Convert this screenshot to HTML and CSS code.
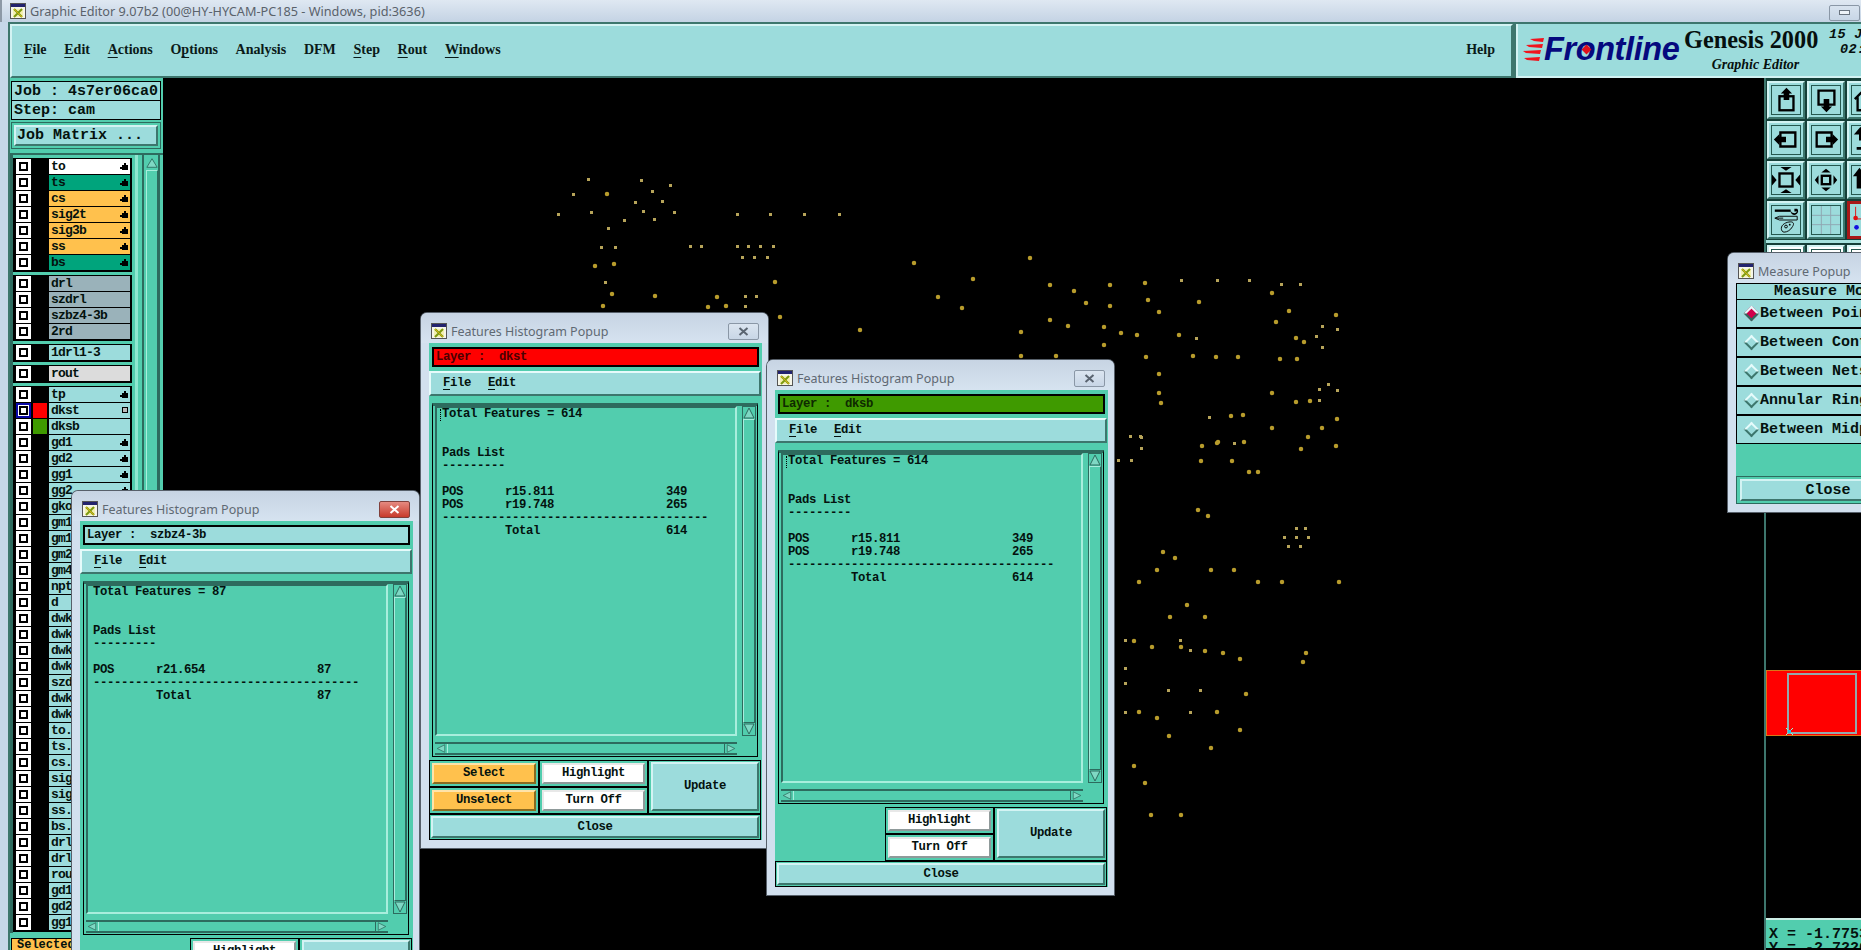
FILE: index.html
```html
<!DOCTYPE html>
<html lang="en">
<head>
<meta charset="utf-8">
<title>Graphic Editor</title>
<link rel="stylesheet" href="styles.css">
</head>
<body>
<svg class="defs" width="0" height="0" aria-hidden="true">
  <symbol id="winicon" viewBox="0 0 16 16">
    <rect x="0.5" y="0.5" width="15" height="15" fill="#f6f6e8" stroke="#555"/>
    <rect x="1" y="1" width="14" height="3" fill="#23236e"/>
    <rect x="3" y="6" width="10" height="8" fill="#f4f0b0"/>
    <path d="M4 6l8 8M12 6l-8 8" stroke="#7c9a10" stroke-width="2"/>
    <path d="M4 6l8 8" stroke="#d8b010" stroke-width="1"/>
  </symbol>
  <symbol id="thumb" viewBox="0 0 8 8">
    <path d="M4 0h2v2h2v5H2V6H0V4h2V2h2z" fill="#000"/>
  </symbol>
</svg>

<div class="titlebar">
  <svg class="winicon"><use href="#winicon"/></svg>
  <span class="titletext">Graphic Editor 9.07b2 (00@HY-HYCAM-PC185 - Windows, pid:3636)</span>
  <span class="minbtn"><i></i></span>
</div>

<div class="frame">
  <header class="header">
    <nav class="menubar">
      <span><u>F</u>ile</span><span><u>E</u>dit</span><span><u>A</u>ctions</span><span>O<u>p</u>tions</span><span>Analysis</span><span>DFM</span><span><u>S</u>tep</span><span><u>R</u>out</span><span><u>W</u>indows</span>
      <span class="help">Help</span>
    </nav>
    <div class="brand">
      <svg class="speed" width="21" height="24" viewBox="0 0 21 24"><path d="M7 1l14-1-1 4-9-1zM3 7l17-1-1 4-13-1zM0 13l18-1-1 4-14-1zM1 20l16-1-1 4-12-1z" fill="#f0141e"/></svg>
      <span class="frontline">Fr<span class="ring">o<i></i></span>ntline</span>
      <div class="genesis">
        <div class="gen-name">Genesis 2000</div>
        <div class="gen-sub">Graphic Editor</div>
      </div>
      <div class="clock">
        <div>15 Jan</div>
        <div class="clock-time">02:15</div>
      </div>
    </div>
  </header>

  <div class="main">
    <aside class="left">
      <div class="jobinfo">
        <div class="jobline">Job : 4s7er06ca0</div>
        <div class="jobline">Step: cam</div>
      </div>
      <div class="jobmatrix"><div class="raised jm-btn">Job Matrix ...</div></div>
      <div class="listwrap">
        <div class="list">
          <div class="group">
            <div class="row"><b class="chk"></b><i class="sw"></i><span class="lab white">to<svg class="th"><use href="#thumb"/></svg></span></div>
            <div class="row"><b class="chk"></b><i class="sw"></i><span class="lab green">ts<svg class="th"><use href="#thumb"/></svg></span></div>
            <div class="row"><b class="chk"></b><i class="sw"></i><span class="lab orange">cs<svg class="th"><use href="#thumb"/></svg></span></div>
            <div class="row"><b class="chk"></b><i class="sw"></i><span class="lab orange">sig2t<svg class="th"><use href="#thumb"/></svg></span></div>
            <div class="row"><b class="chk"></b><i class="sw"></i><span class="lab orange">sig3b<svg class="th"><use href="#thumb"/></svg></span></div>
            <div class="row"><b class="chk"></b><i class="sw"></i><span class="lab orange">ss<svg class="th"><use href="#thumb"/></svg></span></div>
            <div class="row"><b class="chk"></b><i class="sw"></i><span class="lab green">bs<svg class="th"><use href="#thumb"/></svg></span></div>
          </div>
          <div class="group">
            <div class="row"><b class="chk"></b><i class="sw"></i><span class="lab grey">drl</span></div>
            <div class="row"><b class="chk"></b><i class="sw"></i><span class="lab grey">szdrl</span></div>
            <div class="row"><b class="chk"></b><i class="sw"></i><span class="lab grey">szbz4-3b</span></div>
            <div class="row"><b class="chk"></b><i class="sw"></i><span class="lab grey">2rd</span></div>
          </div>
          <div class="group">
            <div class="row"><b class="chk"></b><i class="sw"></i><span class="lab">1drl1-3</span></div>
          </div>
          <div class="group">
            <div class="row"><b class="chk"></b><i class="sw"></i><span class="lab pale">rout</span></div>
          </div>
          <div class="group">
            <div class="row"><b class="chk"></b><i class="sw"></i><span class="lab">tp<svg class="th"><use href="#thumb"/></svg></span></div>
            <div class="row"><b class="chk active"></b><i class="sw red"></i><span class="lab">dkst<i class="boxmark"></i></span></div>
            <div class="row"><b class="chk"></b><i class="sw grn"></i><span class="lab">dksb</span></div>
            <div class="row"><b class="chk"></b><i class="sw"></i><span class="lab">gd1<svg class="th"><use href="#thumb"/></svg></span></div>
            <div class="row"><b class="chk"></b><i class="sw"></i><span class="lab">gd2<svg class="th"><use href="#thumb"/></svg></span></div>
            <div class="row"><b class="chk"></b><i class="sw"></i><span class="lab">gg1<svg class="th"><use href="#thumb"/></svg></span></div>
            <div class="row"><b class="chk"></b><i class="sw"></i><span class="lab">gg2<svg class="th"><use href="#thumb"/></svg></span></div>
            <div class="row"><b class="chk"></b><i class="sw"></i><span class="lab">gko</span></div>
            <div class="row"><b class="chk"></b><i class="sw"></i><span class="lab">gm1</span></div>
            <div class="row"><b class="chk"></b><i class="sw"></i><span class="lab">gm1</span></div>
            <div class="row"><b class="chk"></b><i class="sw"></i><span class="lab">gm2</span></div>
            <div class="row"><b class="chk"></b><i class="sw"></i><span class="lab">gm4</span></div>
            <div class="row"><b class="chk"></b><i class="sw"></i><span class="lab">npt</span></div>
            <div class="row"><b class="chk"></b><i class="sw"></i><span class="lab">d</span></div>
            <div class="row"><b class="chk"></b><i class="sw"></i><span class="lab">dwk</span></div>
            <div class="row"><b class="chk"></b><i class="sw"></i><span class="lab">dwk</span></div>
            <div class="row"><b class="chk"></b><i class="sw"></i><span class="lab">dwk</span></div>
            <div class="row"><b class="chk"></b><i class="sw"></i><span class="lab">dwk</span></div>
            <div class="row"><b class="chk"></b><i class="sw"></i><span class="lab">szd</span></div>
            <div class="row"><b class="chk"></b><i class="sw"></i><span class="lab">dwk</span></div>
            <div class="row"><b class="chk"></b><i class="sw"></i><span class="lab">dwk</span></div>
            <div class="row"><b class="chk"></b><i class="sw"></i><span class="lab">to.</span></div>
            <div class="row"><b class="chk"></b><i class="sw"></i><span class="lab">ts.</span></div>
            <div class="row"><b class="chk"></b><i class="sw"></i><span class="lab">cs.</span></div>
            <div class="row"><b class="chk"></b><i class="sw"></i><span class="lab">sig</span></div>
            <div class="row"><b class="chk"></b><i class="sw"></i><span class="lab">sig</span></div>
            <div class="row"><b class="chk"></b><i class="sw"></i><span class="lab">ss.</span></div>
            <div class="row"><b class="chk"></b><i class="sw"></i><span class="lab">bs.</span></div>
            <div class="row"><b class="chk"></b><i class="sw"></i><span class="lab">drl</span></div>
            <div class="row"><b class="chk"></b><i class="sw"></i><span class="lab">drl</span></div>
            <div class="row"><b class="chk"></b><i class="sw"></i><span class="lab">rou</span></div>
            <div class="row"><b class="chk"></b><i class="sw"></i><span class="lab">gd1</span></div>
            <div class="row"><b class="chk"></b><i class="sw"></i><span class="lab">gd2</span></div>
            <div class="row"><b class="chk"></b><i class="sw"></i><span class="lab">gg1</span></div>
          </div>
        </div>
        <div class="lscroll">
          <div class="lscroll-bands"></div>
          <div class="lscroll-track">
            <svg class="larrow" viewBox="0 0 14 12"><path d="M7 1l6 10H1z" fill="#7fd8c4" stroke="#2d6b5e"/></svg>
            <div class="lthumb"></div>
          </div>
        </div>
      </div>
      <div class="leftfoot"><span class="selected">Selected</span></div>
    </aside>

    <section class="canvas">
      <svg class="dots" width="1602" height="872" viewBox="163 78 1602 872" fill="none" aria-hidden="true">
        <path class="dot-s" d="M588 179h0M641 180h0M670 185h0M573 194h0M652 191h0M635 202h0M662 201h0M558 214h0M591 212h0M643 211h0M674 212h0M624 220h0M654 219h0M608 228h0M601 247h0M615 247h0M605 282h0M690 246h0M701 246h0M737 214h0M770 214h0M804 214h0M839 214h0M737 246h0M748 246h0M760 246h0M773 246h0M742 257h0M754 257h0M767 257h0M745 296h0M756 296h0M745 306h0M1181 280h0M1217 280h0M1249 280h0M1281 284h0M1300 284h0M1322 326h0M1337 329h0M1196 338h0M1316 336h0M1322 347h0M1328 384h0M1319 389h0M1337 390h0M1319 400h0M1209 417h0M1141 437h0M1141 448h0M1234 443h0M1130 436h0M1140 436h0M1118 460h0M1131 460h0M1296 528h0M1305 528h0M1284 537h0M1296 537h0M1308 537h0M1288 546h0M1300 546h0M1180 640h0M1190 650h0M1125 640h0M1125 668h0M1125 683h0M1125 712h0M1190 712h0M1200 690h0M1168 690h0"/>
        <path class="dot-l" d="M607 194h0M595 266h0M614 264h0M612 294h0M655 296h0M603 306h0M775 282h0M717 297h0M708 307h0M726 306h0M780 317h0M860 330h0M914 263h0M938 297h0M962 308h0M973 279h0M1030 258h0M1050 285h0M1021 332h0M1050 320h0M1068 326h0M1021 356h0M1056 356h0M1074 291h0M1110 285h0M1086 303h0M1110 306h0M1104 327h0M1121 333h0M1104 345h0M1145 283h0M1272 293h0M1148 300h0M1199 302h0M1159 312h0M1289 311h0M1336 315h0M1276 322h0M1137 335h0M1179 335h0M1296 338h0M1304 342h0M1146 357h0M1193 356h0M1216 357h0M1238 357h0M1280 359h0M1297 359h0M1159 374h0M1159 393h0M1272 393h0M1161 403h0M1296 402h0M1310 401h0M1231 416h0M1243 415h0M1337 419h0M1272 428h0M1322 428h0M1308 437h0M1202 446h0M1217 443h0M1336 446h0M1301 449h0M1218 442h0M1244 442h0M1201 461h0M1232 461h0M1249 472h0M1258 472h0M1198 510h0M1208 516h0M1163 552h0M1175 558h0M1211 570h0M1234 570h0M1258 582h0M1282 582h0M1339 582h0M1139 582h0M1157 570h0M1187 605h0M1205 617h0M1306 653h0M1303 662h0M1170 617h0M1134 641h0M1152 647h0M1181 647h0M1205 651h0M1223 653h0M1240 659h0M1246 694h0M1217 712h0M1240 730h0M1211 748h0M1139 712h0M1157 718h0M1169 736h0M1134 766h0M1145 783h0M1181 815h0M1151 815h0"/>
      </svg>
    </section>

    <aside class="right">
      <div class="tools">
        <div class="tool"><span class="tool-in"><svg viewBox="0 0 30 30"><rect x="8" y="11" width="15" height="15" fill="none" stroke="#000" stroke-width="2.500"/><path d="M15.500 2l6 6h-3v7h-6V8h-3z" fill="#000"/></svg></span></div>
        <div class="tool"><span class="tool-in"><svg viewBox="0 0 30 30"><path d="M7 5h17v15H7z" fill="none" stroke="#000" stroke-width="2.500"/><path d="M12.500 14h6v8h3l-6 6-6-6h3z" fill="#000"/></svg></span></div>
        <div class="tool"><span class="tool-in"><svg viewBox="0 0 30 30"><path d="M3 14L13 4l10 10M6 12v14h14V12" fill="none" stroke="#000" stroke-width="2.500"/><rect x="11" y="15" width="8" height="7" fill="none" stroke="#000" stroke-width="2"/></svg></span></div>
        <div class="tool"><span class="tool-in"><svg viewBox="0 0 30 30"><path d="M9 7h16v15H9z" fill="none" stroke="#000" stroke-width="2.500"/><path d="M2 14.500l6-6v3h7v6H8v3z" fill="#000"/></svg></span></div>
        <div class="tool"><span class="tool-in"><svg viewBox="0 0 30 30"><path d="M5 7h16v15H5z" fill="none" stroke="#000" stroke-width="2.500"/><path d="M28 14.500l-6-6v3h-7v6h7v3z" fill="#000"/></svg></span></div>
        <div class="tool"><span class="tool-in"><svg viewBox="0 0 30 30"><path d="M9 6v8h10v10H5" fill="none" stroke="#000" stroke-width="3"/><path d="M9 1L2 9h14z" fill="#000"/></svg></span></div>
        <div class="tool"><span class="tool-in"><svg viewBox="0 0 30 30"><rect x="8" y="8" width="14" height="14" fill="none" stroke="#000" stroke-width="2.500"/><path d="M9 1h12l-6 4zM9 29h12l-6-4zM0 9v12l5-6zM30 9v12l-5-6z" fill="#000"/></svg></span></div>
        <div class="tool"><span class="tool-in"><svg viewBox="0 0 30 30"><rect x="10.500" y="10.500" width="9" height="9" fill="none" stroke="#000" stroke-width="2.500"/><path d="M15 3l5 4H10zM15 27l5-4H10zM3 15l4-5v10zM27 15l-4-5v10z" fill="#000"/></svg></span></div>
        <div class="tool"><span class="tool-in"><svg viewBox="0 0 30 30"><path d="M8 2L1 11h4v13h6V11h4z" fill="#000"/></svg></span></div>
        <div class="tool"><span class="tool-in"><svg viewBox="0 0 30 30"><path d="M3 5h17" stroke="#000" stroke-width="2.500"/><path d="M20 5a4 4 0 1 0 7-2h-3v3h3a4 4 0 0 1-7-1z" fill="#000"/><path d="M8 11h19v4H8l-5-2z" fill="none" stroke="#000"/><path d="M4 13h8" stroke="#000"/><path d="M10 24c0-4 5-7 10-7 3 0 4 2 2 5-2 4-6 6-9 6-2 0-3-2-3-4z" fill="none" stroke="#000"/><circle cx="15" cy="22" r="1.500" fill="none" stroke="#000"/><circle cx="19" cy="20" r="1" fill="#000"/></svg></span></div>
        <div class="tool"><span class="tool-in"><svg viewBox="0 0 30 30"><path d="M10 0v30M20 0v30M0 10h30M0 20h30" stroke="#8fa6b0"/></svg></span></div>
        <div class="tool tool-red"><span class="tool-in"><svg viewBox="0 0 30 30"><path d="M6 3v13h22" fill="none" stroke="#e01010"/><circle cx="6" cy="15" r="2.500" fill="#e01010"/><circle cx="7" cy="25" r="2.500" fill="#1010e0"/></svg></span></div>
      </div>
      <div class="tools tools-white">
        <div class="tool tool-w"><span class="tool-in"></span></div>
        <div class="tool tool-w"><span class="tool-in"></span></div>
        <div class="tool tool-w"><span class="tool-in"></span></div>
      </div>
      <div class="preview"><div class="preview-in"><svg class="cursor" width="9" height="9" viewBox="0 0 9 9"><path d="M1 1l7 7M8 1L1 8" stroke="#8fd" stroke-width="1"/><rect x="3" y="3" width="3" height="3" fill="#22c8e8"/></svg></div></div>
      <div class="coords">
        <div>X = -1.7753</div>
        <div>Y = -2.7220</div>
      </div>
    </aside>
  </div>
</div>

<!-- Floating windows -->
<div class="popup pop-c">
  <div class="ptitle"><svg class="winicon"><use href="#winicon"/></svg><span>Features Histogram Popup</span><span class="xbtn xbtn-red"><svg width="11" height="9" viewBox="0 0 11 9"><path d="M1.500 1l8 7M9.500 1l-8 7" stroke="#fff" stroke-width="2"/></svg></span></div>
  <div class="pbody">
    <div class="layer">Layer :  szbz4-3b</div>
    <div class="raised pmenu"><span><u>F</u>ile</span><span><u>E</u>dit</span></div>
    <div class="tarea">
      <div class="tbox"><pre class="ptext">Total Features = 87


Pads List
---------

POS      r21.654                87
--------------------------------------
         Total                  87</pre></div>
      <div class="vs"><svg class="ar" viewBox="0 0 12 12"><path d="M6 1l5 10H1z" fill="#7fd8c4" stroke="#2d6b5e"/></svg><div class="vthumb"></div><svg class="ar" viewBox="0 0 12 12"><path d="M6 11L1 1h10z" fill="#7fd8c4" stroke="#2d6b5e"/></svg></div>
      <div class="hs"><svg class="ar" viewBox="0 0 12 12"><path d="M1 6l10-5v10z" fill="#7fd8c4" stroke="#2d6b5e"/></svg><div class="hthumb"></div><svg class="ar" viewBox="0 0 12 12"><path d="M11 6L1 1v10z" fill="#7fd8c4" stroke="#2d6b5e"/></svg></div>
    </div>
    <div class="actions">
      <div class="cell noborder"></div>
      <div class="cell"><div class="btn white-btn">Highlight</div></div>
      <div class="cell upd"><div class="raised btn">Update</div></div>
      <div class="cell noborder"></div>
      <div class="cell"><div class="btn white-btn">Turn Off</div></div>
    </div>
    <div class="closebar"><div class="raised btn">Close</div></div>
  </div>
</div>

<div class="popup pop-a">
  <div class="ptitle"><svg class="winicon"><use href="#winicon"/></svg><span>Features Histogram Popup</span><span class="xbtn"><svg width="11" height="9" viewBox="0 0 11 9"><path d="M1.500 1l8 7M9.500 1l-8 7" stroke="#5a6470" stroke-width="2"/></svg></span></div>
  <div class="pbody">
    <div class="layer layer-red">Layer :  dkst</div>
    <div class="raised pmenu"><span><u>F</u>ile</span><span><u>E</u>dit</span></div>
    <div class="tarea">
      <div class="tbox"><i class="caret"></i><pre class="ptext">Total Features = 614


Pads List
---------

POS      r15.811                349
POS      r19.748                265
--------------------------------------
         Total                  614</pre></div>
      <div class="vs"><svg class="ar" viewBox="0 0 12 12"><path d="M6 1l5 10H1z" fill="#7fd8c4" stroke="#2d6b5e"/></svg><div class="vthumb"></div><svg class="ar" viewBox="0 0 12 12"><path d="M6 11L1 1h10z" fill="#7fd8c4" stroke="#2d6b5e"/></svg></div>
      <div class="hs"><svg class="ar" viewBox="0 0 12 12"><path d="M1 6l10-5v10z" fill="#7fd8c4" stroke="#2d6b5e"/></svg><div class="hthumb"></div><svg class="ar" viewBox="0 0 12 12"><path d="M11 6L1 1v10z" fill="#7fd8c4" stroke="#2d6b5e"/></svg></div>
    </div>
    <div class="actions">
      <div class="cell"><div class="btn orange-btn">Select</div></div>
      <div class="cell"><div class="btn white-btn">Highlight</div></div>
      <div class="cell upd"><div class="raised btn">Update</div></div>
      <div class="cell"><div class="btn orange-btn">Unselect</div></div>
      <div class="cell"><div class="btn white-btn">Turn Off</div></div>
    </div>
    <div class="closebar"><div class="raised btn">Close</div></div>
  </div>
</div>

<div class="popup pop-b">
  <div class="ptitle"><svg class="winicon"><use href="#winicon"/></svg><span>Features Histogram Popup</span><span class="xbtn"><svg width="11" height="9" viewBox="0 0 11 9"><path d="M1.500 1l8 7M9.500 1l-8 7" stroke="#5a6470" stroke-width="2"/></svg></span></div>
  <div class="pbody">
    <div class="layer layer-green">Layer :  dksb</div>
    <div class="raised pmenu"><span><u>F</u>ile</span><span><u>E</u>dit</span></div>
    <div class="tarea">
      <div class="tbox"><i class="caret"></i><pre class="ptext">Total Features = 614


Pads List
---------

POS      r15.811                349
POS      r19.748                265
--------------------------------------
         Total                  614</pre></div>
      <div class="vs"><svg class="ar" viewBox="0 0 12 12"><path d="M6 1l5 10H1z" fill="#7fd8c4" stroke="#2d6b5e"/></svg><div class="vthumb"></div><svg class="ar" viewBox="0 0 12 12"><path d="M6 11L1 1h10z" fill="#7fd8c4" stroke="#2d6b5e"/></svg></div>
      <div class="hs"><svg class="ar" viewBox="0 0 12 12"><path d="M1 6l10-5v10z" fill="#7fd8c4" stroke="#2d6b5e"/></svg><div class="hthumb"></div><svg class="ar" viewBox="0 0 12 12"><path d="M11 6L1 1v10z" fill="#7fd8c4" stroke="#2d6b5e"/></svg></div>
    </div>
    <div class="actions">
      <div class="cell noborder"></div>
      <div class="cell"><div class="btn white-btn">Highlight</div></div>
      <div class="cell upd"><div class="raised btn">Update</div></div>
      <div class="cell noborder"></div>
      <div class="cell"><div class="btn white-btn">Turn Off</div></div>
    </div>
    <div class="closebar"><div class="raised btn">Close</div></div>
  </div>
</div>

<div class="popup pop-d">
  <div class="ptitle"><svg class="winicon"><use href="#winicon"/></svg><span>Measure Popup</span></div>
  <div class="mbody">
    <div class="mlabel">Measure Mode</div>
    <div class="mrow"><i class="dia on"></i>Between Points</div>
    <div class="mrow"><i class="dia"></i>Between Contours</div>
    <div class="mrow"><i class="dia"></i>Between Nets</div>
    <div class="mrow"><i class="dia"></i>Annular Ring</div>
    <div class="mrow"><i class="dia"></i>Between Midpoints</div>
    <div class="mspace"></div>
    <div class="mclose"><div class="raised mclose-btn">Close</div></div>
  </div>
</div>
</body>
</html>
```

FILE: styles.css
```css
*, *::before, *::after { box-sizing: border-box; }
html { height: 950px; overflow: hidden; }
body {
  margin: 0;
  width: 1861px;
  height: 950px;
  overflow: hidden;
  position: relative;
  background: #c6d7e9;
  font-family: "Liberation Mono", monospace;
  color: #04120e;
}
.defs { position: absolute; }
i { display: block; font-style: normal; }

/* title bar */
.titlebar {
  height: 22px;
  display: flex;
  align-items: center;
  padding-left: 8px;
  background: linear-gradient(#dfe8f2, #c4d3e4);
  border-left: 2px solid #8d99a6;
}
.winicon { width: 16px; height: 16px; flex: none; }
.titletext {
  margin-left: 4px;
  font: 12.700px/22px "Noto Sans", sans-serif;
  color: #5a626b;
}
.minbtn {
  margin-left: auto;
  margin-right: 1px;
  margin-top: 3px;
  width: 31px;
  height: 16px;
  border: 1px solid #8a97a6;
  border-radius: 2px;
  background: linear-gradient(#d8e3ef, #c8d6e6);
  display: flex;
  align-items: center;
  justify-content: center;
}
.minbtn i { width: 11px; height: 5px; background: #eef3f8; border: 1px solid #6a7480; }

/* frame */
.frame {
  margin-left: 8px;
  height: 928px;
  background: #000;
  display: flex;
  flex-direction: column;
  border-left: 2px solid #3d766d;
}
.header {
  height: 56px;
  flex: none;
  display: flex;
  background: #3d766d;
  padding-top: 2px;
}
.menubar {
  width: 1503px;
  display: flex;
  align-items: center;
  gap: 17.700px;
  padding: 0 0 3px 12px;
  background: #9cdcdc;
  border: 2px solid;
  border-color: #d3f3f3 #3d766d #3d766d #d3f3f3;
  font: bold 14px "Liberation Serif", serif;
  color: #0a1a18;
}
.menubar u { text-underline-offset: 3px; }
.help { margin-left: auto; margin-right: 16px; }
.brand {
  flex: 1;
  margin-left: 3px;
  display: flex;
  padding-left: 5px;
  background: #9cdcdc;
  border-left: 2px solid #d3f3f3;
  border-bottom: 2px solid #d3f3f3;
  overflow: hidden;
}
.speed { flex: none; margin-top: 14px; }
.frontline {
  font: italic bold 32.500px/54px "Liberation Sans", sans-serif;
  color: #05097e;
  letter-spacing: -0.400px;
  width: 140px;
  flex: none;
  margin-top: -2px;
  white-space: nowrap;
}
.ring { position: relative; display: inline-block; }
.ring i {
  position: absolute;
  left: 7px;
  top: 24px;
  width: 7px;
  height: 7px;
  background: #e0101c;
  transform: rotate(45deg);
}
.genesis { width: 145px; flex: none; text-align: center; font-family: "Liberation Serif", serif; font-weight: bold; color: #06100e; }
.gen-name { font-size: 24.300px; line-height: 28px; margin-top: 2px; text-align: left; }
.gen-sub { font-style: italic; font-size: 14px; line-height: 16px; margin-top: 3px; padding-right: 2px; }
.clock { font: italic bold 13.500px/15px "Liberation Mono", monospace; margin-top: 3px; letter-spacing: 0.300px; white-space: nowrap; color: #06100e; }
.clock-time { margin-left: 11px; }

/* body */
.main {
  flex: 1;
  min-height: 0;
  display: flex;
  background: #000;
}
.left {
  width: 153px;
  flex: none;
  background: #52cdae;
  display: flex;
  flex-direction: column;
  padding-top: 3px;
  overflow: hidden;
}
.jobinfo { margin: 0 2px 0 1px; background: #000; padding: 1px 1px 1px; }
.jobline {
  height: 18px;
  background: #9cdcdc;
  font: bold 15px/20px "Liberation Mono", monospace;
  padding-left: 2px;
  white-space: nowrap;
  overflow: hidden;
}
.jobline + .jobline { margin-top: 1px; }
.jobmatrix {
  margin: 2px 2px 0 1px;
  height: 27px;
  border: 1px solid #2d6b5e;
  padding: 2px 2px;
}
.raised {
  background: #9cdcdc;
  border: 2px solid;
  border-color: #d3f3f3 #3d766d #3d766d #d3f3f3;
}
.jm-btn { height: 21px; font: bold 15px/17px "Liberation Mono", monospace; padding-left: 1px; }
.listwrap {
  flex: 1;
  min-height: 0;
  margin-top: 4px;
  display: flex;
  overflow: hidden;
  border-top: 2px solid #2d6b5e;
}
.list {
  width: 125px;
  flex: none;
  padding: 3px 0 0 0;
  border-left: 3px solid #2d6b5e;
  background: #52cdae;
  overflow: hidden;
}
.group {
  background: #000;
  padding: 1px 2px 1px 1px;
  margin-bottom: 3px;
  width: 119px;
}
.row { display: flex; height: 16px; }
.chk {
  display: block;
  margin: 0 2px 1px 2px;
  width: 15px;
  height: 15px;
  background: #fff;
  padding: 3px;
  flex: none;
  position: relative;
}
.chk::after {
  content: "";
  display: block;
  width: 9px;
  height: 9px;
  border: 2px solid #000;
  background: #fff;
}
.chk.active { outline: 2px solid #0808a8; outline-offset: -2px; }
.sw { width: 14px; height: 15px; margin: 0 2px 1px 0; flex: none; background: #000; }
.sw.red { background: #ff0000; }
.sw.grn { background: #3f9a00; }
.lab {
  flex: 1;
  margin: 0 0 1px;
  height: 15px;
  background: #9cdcdc;
  padding-left: 2px;
  font: bold 13px/15px "Liberation Mono", monospace;
  letter-spacing: -0.800px;
  position: relative;
  white-space: nowrap;
}
.white { background: #fff; }
.green { background: #00a47c; }
.orange { background: #ffc14d; }
.grey { background: #9ab2ba; }
.pale { background: #dcdcdc; }
.th { position: absolute; right: 2px; top: 4px; width: 8px; height: 8px; }
.boxmark {
  position: absolute;
  right: 2px;
  top: 4px;
  width: 6px;
  height: 6px;
  border: 1px solid #000;
  background: #bbb;
}
.lscroll { width: 25px; flex: none; display: flex; }
.lscroll-bands {
  width: 11px;
  background: linear-gradient(90deg, #8fe6cf 0 3px, #52cdae 3px 7px, #2d6b5e 7px 9px, #52cdae 9px);
}
.lscroll-track {
  width: 14px;
  display: flex;
  flex-direction: column;
  padding-top: 2px;
  background: #52cdae;
  border-right: 2px solid #2d6b5e;
}
.larrow { width: 12px; height: 12px; flex: none; }
.lthumb { flex: 1; border: 1px solid; border-color: #a8eedd #2d6b5e #2d6b5e #a8eedd; width: 12px; margin-top: 1px; }
.leftfoot { height: 12px; flex: none; margin-top: 5px; padding-left: 1px; overflow: hidden; }
.selected {
  display: block;
  width: 70px;
  height: 14px;
  background: #ffc14d;
  border: 1px solid #000;
  font: bold 12px/13px "Liberation Mono", monospace;
  padding-left: 5px;
  white-space: nowrap;
}

/* canvas */
.canvas { flex: 1; min-width: 0; background: #000; overflow: hidden; }
.dots { display: block; }
.dot-s { stroke: #b7a45a; stroke-width: 3; stroke-linecap: square; shape-rendering: crispEdges; }
.dot-l { stroke: #b89c2c; stroke-width: 4.500; stroke-linecap: round; }

/* right column */
.right {
  width: 97px;
  flex: none;
  border-left: 2px solid #3d766d;
  display: flex;
  flex-direction: column;
  overflow: hidden;
  background: #000;
  margin-left: -1px;
}
.tools {
  display: grid;
  grid-template-columns: repeat(3, 38px);
  gap: 2px;
  width: 122px;
  padding: 3px 0 1px 1px;
  background: #153f38;
  flex: none;
  border-bottom: 3px solid #a6e2de;
}
.tools-white { border-bottom: 0; padding-top: 2px; height: 120px; }
.tool {
  width: 38px;
  height: 38px;
  background: #9cdcdc;
  border: 2px solid;
  border-color: #d3f3f3 #3d766d #3d766d #d3f3f3;
  padding: 2px;
}
.tool-in { display: block; width: 30px; height: 30px; border: 1px solid #25584f; }
.tool-in svg { display: block; width: 28px; height: 28px; }
.tool-red { background: #a81818; border-color: #a81818; padding: 0; }
.tool-red .tool-in { width: 34px; height: 34px; background: #9cdcdc; border: 1px solid #a81818; }
.tool-w { background: #fff; }
.preview {
  margin-top: 307px;
  height: 66px;
  flex: none;
  width: 97px;
  background: #ff0000;
  border: 1px solid #d87818;
  border-right: 0;
  padding: 2px 0 0 20px;
}
.preview-in {
  width: 70px;
  height: 61px;
  border: 2px solid #93a9ad;
  position: relative;
}
.cursor { position: absolute; left: -4px; bottom: -4px; }
.coords {
  margin-top: 182px;
  height: 30px;
  flex: none;
  overflow: hidden;
  background: #52cdae;
  border-top: 2px solid #cdeee6;
  padding: 8px 0 0 3px;
  font: bold 15px/14px "Liberation Mono", monospace;
  white-space: nowrap;
}

/* popups */
.popup {
  position: absolute;
  width: 347px;
  height: 535px;
  background: #d2e0ee;
  border-radius: 6px 6px 0 0;
  box-shadow: 0 0 0 1px #57606a;
  padding: 0 6px 8px 8px;
}
.pop-a { left: 421px; top: 313px; }
.pop-b { left: 767px; top: 360px; }
.pop-c { left: 72px; top: 491px; height: 459px; overflow: hidden; }
.pop-d { left: 1728px; top: 253px; width: 192px; height: 259px; padding: 0 0 8px 8px; }
.ptitle {
  height: 30px;
  display: flex;
  align-items: center;
  gap: 4px;
  font: 12.500px "Noto Sans", sans-serif;
  color: #5f6973;
  background: linear-gradient(#c7d4e3, #d6e3f0);
  margin: 0 -6px 0 -8px;
  padding: 6px 0 0 10px;
  border-radius: 6px 6px 0 0;
}
.pop-d .ptitle { margin-right: 0; }
.xbtn {
  margin-left: auto;
  margin-right: 9px;
  width: 31px;
  height: 17px;
  border: 1px solid #8a97a6;
  border-radius: 2px;
  background: linear-gradient(#dbe5f0, #c8d6e6);
  display: flex;
  align-items: center;
  justify-content: center;
}
.xbtn-red { background: linear-gradient(#e58a80, #c83a2c); border-color: #80403c; }
.pbody {
  height: 497px;
  background: #52cdae;
  padding-top: 4px;
  font: bold 12.300px/13px "Liberation Mono", monospace;
  letter-spacing: -0.380px;
}
.layer {
  height: 20px;
  margin: 0 3px;
  border: 2px solid #000;
  background: #9cdcdc;
  padding-left: 2px;
  line-height: 16px;
  white-space: pre;
}
.layer-red { background: #ff0000; color: #4a0000; }
.layer-green { background: #3f9a00; color: #0e2a00; }
.pmenu {
  margin: 4px 1px 7px 0;
  height: 25px;
  padding-left: 12px;
  display: flex;
  gap: 17px;
  align-items: center;
  border-color: #e6fbfb #3d766d #3d766d #e6fbfb;
}
.pmenu u { text-underline-offset: 3px; }
.tarea {
  height: 354px;
  margin: 0 4px 3px 3px;
  border: 1px solid #000;
  background: #52cdae;
  border-top: 3px solid #2d6b5e;
  display: grid;
  grid-template-columns: 1fr 15px;
  grid-template-rows: 1fr 13px;
  column-gap: 5px;
  row-gap: 6px;
  padding: 0 0 1px 2px;
}
.tbox {
  position: relative;
  border: 2px solid;
  border-color: #2d6b5e #a8eedd #a8eedd #2d6b5e;
  padding-left: 5px;
  overflow: hidden;
}
.caret { position: absolute; left: 3px; top: 1px; height: 12px; border-left: 1px dotted #000; }
.ptext { margin: 0; font: inherit; }
.vs {
  grid-column: 2;
  grid-row: 1;
  display: flex;
  flex-direction: column;
  border: 1px solid #2d6b5e;
  background: #52cdae;
  margin-right: 1px;
}
.hs {
  grid-column: 1;
  grid-row: 2;
  display: flex;
  border-top: 2px solid #2d6b5e;
  border-bottom: 2px solid #2d6b5e;
  background: #52cdae;
  height: 13px;
}
.ar { width: 12px; height: 12px; flex: none; }
.hs .ar { height: 9px; }
.vthumb { flex: 1; border: 1px solid; border-color: #a8eedd #2d6b5e #2d6b5e #a8eedd; }
.hthumb { flex: 1; border-left: 1px solid #a8eedd; border-right: 1px solid #2d6b5e; }
.actions {
  display: grid;
  grid-template-columns: 110px 109px 1fr;
  grid-template-rows: 27px 27px;
  height: 54px;
  margin-right: 1px;
  background: #000;
  text-align: center;
}
.cell { border: 1px solid #000; background: #52cdae; padding: 2px; display: flex; }
.cell.noborder { border-color: #52cdae; }
.upd { grid-column: 3; grid-row: 1 / span 2; padding: 1px 1px 2px 2px; }
.btn { flex: 1; display: flex; align-items: center; justify-content: center; }
.orange-btn { background: #ffc14d; border: 2px solid; border-color: #ffe3a8 #8a6a20 #8a6a20 #ffe3a8; }
.white-btn { background: #fff; border: 2px solid; border-color: #e8e8e8 #8f9a9a #8f9a9a #e8e8e8; }
.closebar { height: 26px; margin-right: 1px; border: 1px solid #000; padding: 1px; display: flex; }

/* measure */
.mbody { height: 221px; background: #52cdae; display: flex; flex-direction: column; font: bold 15px "Liberation Mono", monospace; white-space: nowrap; }
.mlabel { height: 16px; line-height: 15px; background: #9cdcdc; border: 1px solid #000; border-bottom: 0; text-align: center; }
.mrow {
  height: 29px;
  background: #9cdcdc;
  display: flex;
  align-items: center;
  gap: 3px;
  padding-left: 8px;
  border-top: 1px solid #000;
  border-bottom: 1px solid #000;
  border-left: 1px solid #000;
}
.dia {
  width: 11px;
  height: 11px;
  flex: none;
  margin-left: 1px;
  transform: rotate(45deg);
  background: #9cdcdc;
  border: 2px solid;
  border-color: #e6fbfb #3d766d #3d766d #e6fbfb;
}
.dia.on { background: #d0004a; border-color: #e6fbfb #2d6b5e #2d6b5e #e6fbfb; }
.mspace { flex: 1; }
.mclose { height: 28px; border: 1px solid #2d6b5e; padding: 2px 3px; display: flex; }
.mclose-btn { flex: 1; text-align: center; line-height: 20px; }
```
